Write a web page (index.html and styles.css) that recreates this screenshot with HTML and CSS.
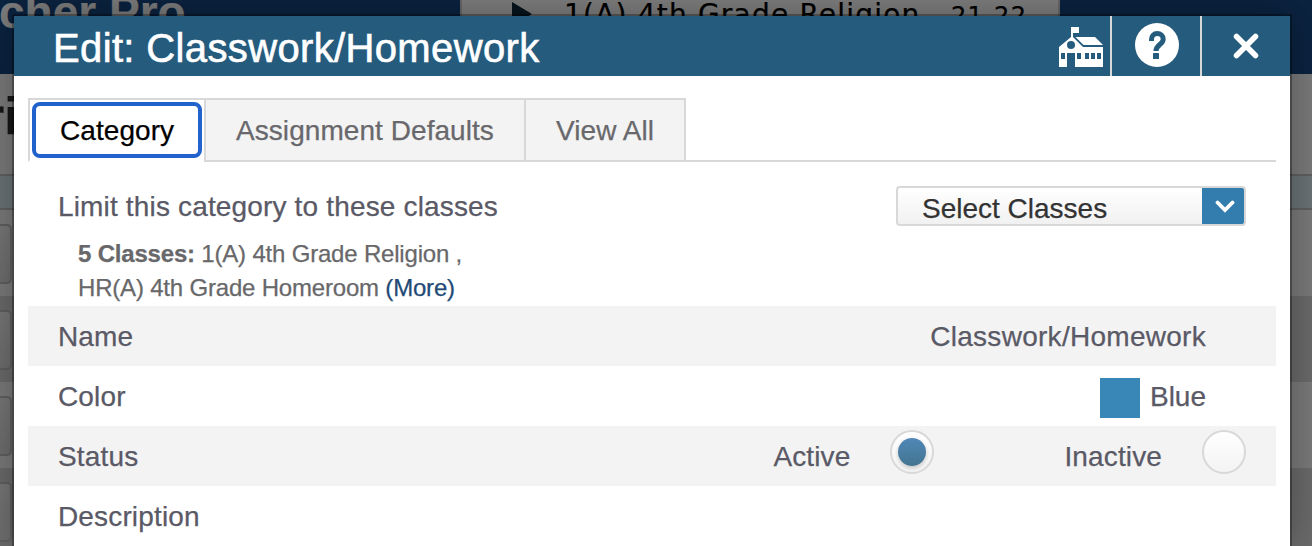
FILE: index.html
```
<!DOCTYPE html>
<html lang="en">
<head>
    <meta charset="UTF-8">
    <meta name="viewport" content="width=device-width, initial-scale=1.0">
    <title>Edit: Classwork/Homework</title>
    <link rel="stylesheet" href="styles.css">
</head>
<body>
    <div class="page">
        <div class="top-bar">
            <div class="brand">cher Pro</div>
            <div class="class-picker">
                <svg class="arrow" width="20" height="24" viewBox="0 0 20 24"><path d="M0 0 20 12 0 24z" fill="#07151d"/></svg>
                <span class="picker-name">1(A) 4th Grade Religion</span>
                <span class="picker-term">21-22</span>
            </div>
        </div>
        <div class="page-title">ri</div>
        <div class="table-head"></div>
        <div class="table-row"><div class="field"></div></div>
        <div class="table-row alt"><div class="field"></div></div>
        <div class="table-row"><div class="field"></div></div>
        <div class="table-row alt"><div class="field"></div></div>
    </div>

    <div class="dialog">
        <div class="dialog-header">
            <h1>Edit: Classwork/Homework</h1>
            <button class="header-btn school-btn">
                <svg width="44" height="40" viewBox="0 0 44 40">
                    <path fill="#fff" fill-rule="evenodd" d="M12 0h8v6h-6v4l10 10h20v20H16V26H8v14H0V20L12 10zM12 14a4 4 0 1 0 0 8 4 4 0 0 0 0-8zM2 26v6h4v-6zM18 26v6h4v-6zM26 26v6h4v-6zM32 26v6h4v-6zM38 26v6h4v-6z"/>
                    <path fill="#fff" d="M16.500 10H36l8 8H24.500z"/>
                </svg>
            </button>
            <button class="header-btn help-btn">
                <svg width="44" height="44" viewBox="0 0 44 44">
                    <circle cx="22" cy="22" r="22" fill="#fff"/>
                    <path d="M16.500 18v-1.500c0-3.600 2.300-6 5.700-6s6 2.400 6 5.700c0 5.300-7.200 5.500-7.200 11.800" fill="none" stroke="#255c7e" stroke-width="5"/>
                    <rect x="18" y="30" width="6" height="6" rx="0.500" fill="#255c7e"/>
                </svg>
            </button>
            <button class="header-btn close-btn">
                <svg width="26" height="26" viewBox="0 0 26 26"><path d="M3.500 3.500l19 19M22.500 3.500l-19 19" stroke="#fff" stroke-width="5.500" stroke-linecap="round"/></svg>
            </button>
        </div>

        <div class="dialog-body">
            <div class="tabs">
                <div class="tab active"><span class="tab-focus">Category</span></div>
                <div class="tab defaults">Assignment Defaults</div>
                <div class="tab view-all">View All</div>
                <div class="tab-rest"></div>
            </div>

            <div class="classes">
                <div class="classes-top">
                    <span class="limit">Limit this category to these classes</span>
                    <div class="select">
                        <span class="select-text">Select Classes</span>
                        <span class="select-arrow">
                            <svg width="20" height="13" viewBox="0 0 20 13"><path d="M2.500 2.500l7.500 7.500 7.500-7.500" fill="none" stroke="#fff" stroke-width="3.800" stroke-linecap="round"/></svg>
                        </span>
                    </div>
                </div>
                <div class="class-list">
                    <div class="line-one"><b>5 Classes:</b> 1(A) 4th Grade Religion ,</div>
                    <div class="line-two">HR(A) 4th Grade Homeroom <a class="more">(More)</a></div>
                </div>
            </div>

            <div class="row shaded">
                <span class="label">Name</span>
                <span class="value name-value">Classwork/Homework</span>
            </div>
            <div class="row">
                <span class="label">Color</span>
                <span class="value"><span class="swatch"></span>Blue</span>
            </div>
            <div class="row shaded status">
                <span class="label">Status</span>
                <label class="option">Active <span class="radio checked"></span></label>
                <label class="option">Inactive <span class="radio"></span></label>
            </div>
            <div class="row">
                <span class="label">Description</span>
            </div>
        </div>
    </div>
</body>
</html>
```
FILE: styles.css
```
* {
    box-sizing: border-box;
}

body {
    margin: 0;
    width: 1312px;
    height: 546px;
    overflow: hidden;
    font-family: "Liberation Sans", Arial, sans-serif;
    font-size: 28px;
    color: #5a5966;
    -webkit-text-stroke: 0.25px;
}

/* dimmed page behind the dialog */
.page {
    height: 546px;
    overflow: hidden;
    background: #7b7b7b;
}

.top-bar {
    display: flex;
    height: 74px;
    background: #0b2340;
}

.brand {
    width: 460px;
    margin-top: -15px;
    margin-left: -1px;
    margin-right: 1px;
    font-size: 46px;
    line-height: 54px;
    font-weight: bold;
    color: #7d7d7d;
}

.class-picker {
    display: flex;
    align-items: flex-start;
    width: 600px;
    height: 74px;
    padding-left: 50px;
    border: solid #696969;
    border-width: 0 2px;
    background: #7f7f7f;
    color: #000;
    font-family: "DejaVu Sans", Verdana, sans-serif;
}

.arrow {
    margin-top: 2px;
}

.picker-name {
    width: 387px;
    margin-left: 32px;
    margin-top: -2px;
    font-size: 28px;
    line-height: 34px;
    letter-spacing: 1.2px;
    white-space: nowrap;
}

.picker-term {
    margin-top: 1px;
    font-size: 24px;
    line-height: 30px;
    letter-spacing: 1.3px;
}

.page-title {
    height: 100px;
    margin-left: -16px;
    padding-top: 16px;
    font-size: 52px;
    line-height: 52px;
    font-weight: bold;
    color: #171717;
}

.table-head {
    height: 36px;
    border: solid #606060;
    border-width: 2px 0;
    background: #6c7478;
}

.table-row {
    height: 86px;
    padding-top: 14px;
}

.table-row.alt {
    background: #6b6b6b;
}

.field {
    width: 12px;
    height: 60px;
    border: 2px solid #606060;
    border-left: 0;
    border-radius: 0 5px 5px 0;
    background: linear-gradient(#787878, #6e6e6e);
}

/* dialog */
.dialog {
    position: absolute;
    top: 16px;
    left: 14px;
    width: 1276px;
    height: 530px;
    background: #fff;
    box-shadow: 0 0 0 2px rgba(0, 0, 0, 0.3), 0 0 40px rgba(0, 0, 0, 0.35);
}

.dialog-header {
    display: flex;
    height: 60px;
    background: #255c7e;
    color: #fff;
}

.dialog-header h1 {
    flex: 1;
    margin: 0;
    padding: 2px 0 0 39px;
    font-size: 40px;
    font-weight: normal;
    line-height: 60px;
    letter-spacing: 0.36px;
    -webkit-text-stroke: 0.6px;
}

.header-btn {
    display: flex;
    align-items: center;
    justify-content: center;
    height: 60px;
    padding: 0;
    border: 0;
    background: none;
}

.school-btn {
    width: 58px;
    padding-top: 2px;
}

.help-btn {
    width: 90px;
    padding-bottom: 2px;
    padding-left: 2px;
    border-left: 2px solid #d8d8d8;
}

.close-btn {
    width: 90px;
    border-left: 2px solid #d8d8d8;
}

.dialog-body {
    padding: 22px 14px 0;
}

.tabs {
    display: flex;
    height: 64px;
}

.tab {
    padding-left: 30px;
    border: 2px solid #d8d8d8;
    border-right: 0;
    background: #f3f3f3;
    color: #68686c;
    line-height: 61px;
    letter-spacing: 0.06px;
    white-space: nowrap;
}

.tab.active {
    width: 176px;
    padding: 2px;
    border-bottom-color: #fff;
    background: #fff;
    color: #000;
}

.tab-focus {
    display: block;
    width: 170px;
    height: 56px;
    padding-left: 24px;
    border: 4px solid #2162cc;
    border-radius: 8px;
    line-height: 49px;
}

.defaults {
    width: 320px;
}

.view-all {
    width: 162px;
    border-right: 2px solid #d8d8d8;
}

.tab-rest {
    flex: 1;
    border-bottom: 2px solid #d8d8d8;
}

.classes {
    height: 144px;
    padding-top: 24px;
}

.classes-top {
    display: flex;
    justify-content: space-between;
    padding: 0 30px;
    line-height: 42px;
}

.limit {
    letter-spacing: 0.16px;
}

.select {
    display: flex;
    justify-content: space-between;
    width: 350px;
    height: 40px;
    border: 2px solid #d8d8d8;
    border-radius: 4px;
    background: linear-gradient(#fff, #f1f1f1);
    color: #333;
}

.select-text {
    padding-left: 24px;
    line-height: 41px;
}

.select-arrow {
    display: flex;
    align-items: center;
    justify-content: center;
    width: 42px;
    padding-left: 4px;
    background: #337cae;
    border-radius: 0 2px 2px 0;
}

.class-list {
    margin-top: 9px;
    padding-left: 50px;
    font-size: 24px;
    line-height: 34px;
    letter-spacing: -0.19px;
    color: #68686a;
}

.more {
    color: #234a76;
}

.row {
    display: flex;
    justify-content: space-between;
    height: 60px;
    padding: 0 70px 0 30px;
    line-height: 61px;
}

.shaded {
    background: #f3f3f3;
}

.label {
    letter-spacing: 0.15px;
}

.value {
    display: flex;
}

.name-value {
    letter-spacing: 0.28px;
}

.swatch {
    width: 40px;
    height: 40px;
    margin: 12px 10px 0 0;
    background: #3987b6;
}

.row.status {
    padding-right: 30px;
}

.status .label {
    flex: 1;
}

.option {
    display: flex;
    margin-left: 130px;
    letter-spacing: 0.13px;
}

.radio {
    width: 44px;
    height: 44px;
    margin: 4px 0 0 40px;
    padding: 6px;
    border: 2px solid #d8d8d8;
    border-radius: 50%;
    background: linear-gradient(#fff, #f3f3f3);
}

.radio.checked::before {
    content: "";
    display: block;
    width: 28px;
    height: 28px;
    border-radius: 50%;
    background: linear-gradient(#5087b7, #437590);
    box-shadow: 0 2px 4px rgba(0, 0, 0, 0.2);
}
```
